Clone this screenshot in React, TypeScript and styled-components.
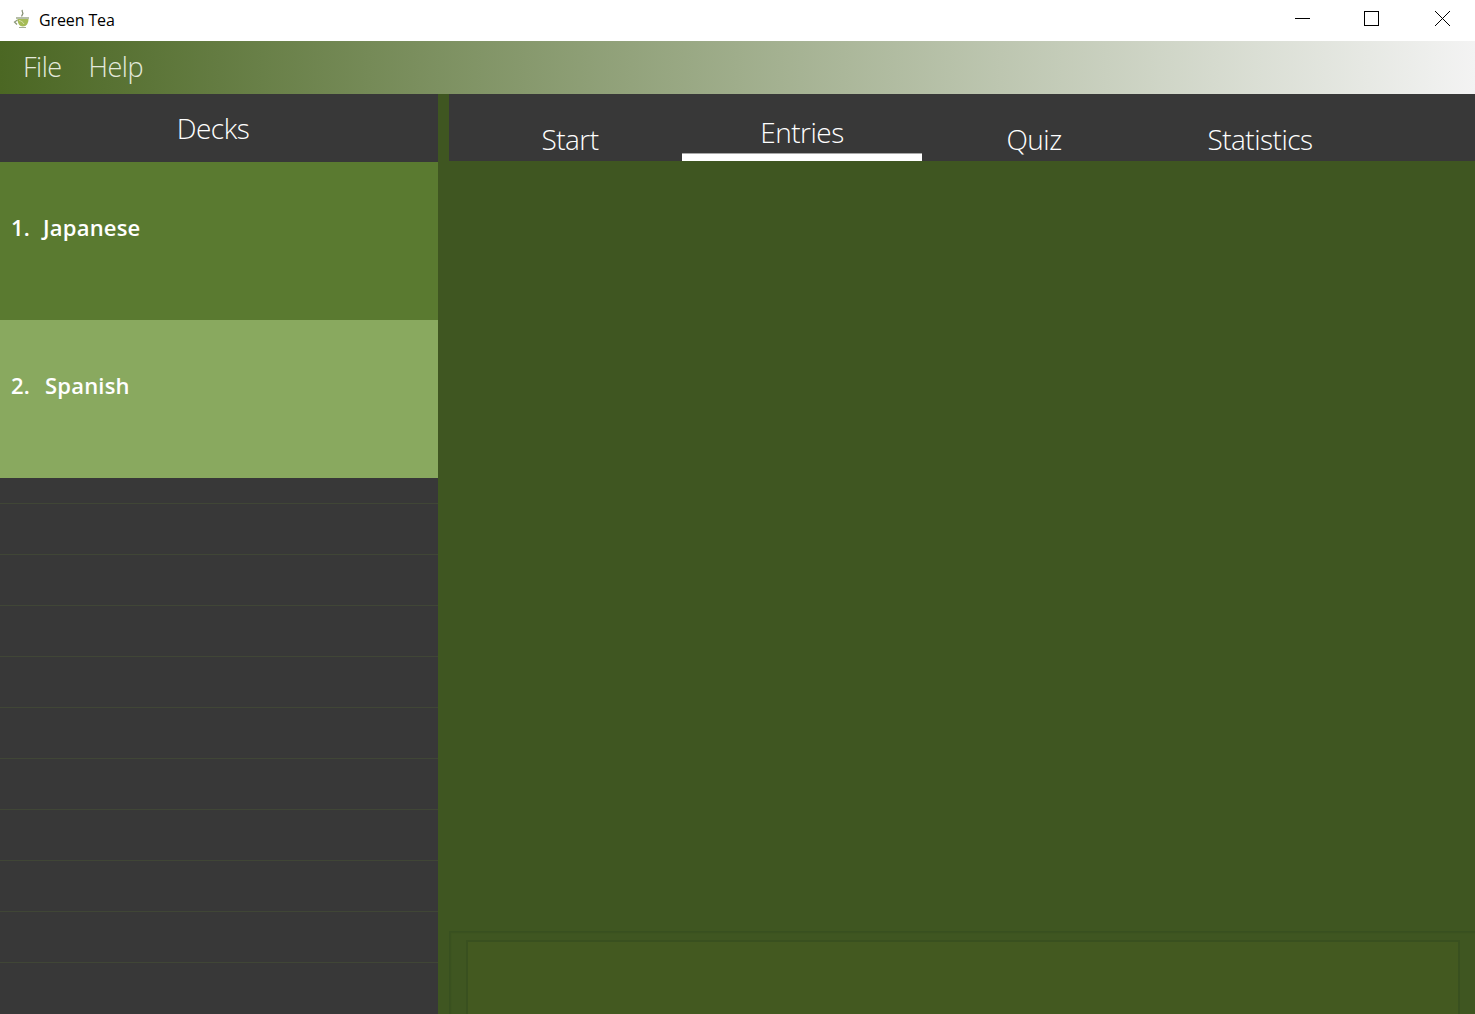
import React from "react";
import styled, { createGlobalStyle } from "styled-components";

const GlobalStyle = createGlobalStyle`
  html, body {
    margin: 0;
    padding: 0;
    height: 100%;
    overflow: hidden;
    background: #3f5621;
  }
  * {
    box-sizing: border-box;
  }
  #root {
    height: 100%;
  }
`;

const Window = styled.div`
  width: 100%;
  height: 1014px;
  display: flex;
  flex-direction: column;
  overflow: hidden;
  font-family: "Open Sans", "Noto Sans", sans-serif;
`;

const TitleBar = styled.div`
  height: 41px;
  flex: none;
  display: flex;
  align-items: center;
  justify-content: space-between;
  background: #ffffff;
`;

const TitleLeft = styled.div`
  display: flex;
  align-items: center;
  padding-left: 13px;
  gap: 8px;
`;

const TitleIcon = styled.svg`
  width: 18px;
  height: 20px;
  margin-top: -3px;
  display: block;
`;

const TitleText = styled.span`
  font-size: 16px;
  color: #000000;
  line-height: 20px;
  margin-top: -2px;
  letter-spacing: -0.12px;
`;

const WindowControls = styled.div`
  display: flex;
  align-items: center;
  margin-top: -6px;
`;

const ControlIcon = styled.svg`
  width: 70px;
  height: 16px;
  display: block;
`;

const MenuBar = styled.div`
  height: 53px;
  flex: none;
  display: flex;
  align-items: center;
  padding: 0 0 2px 23px;
  gap: 27px;
  background: linear-gradient(90deg, #4b6723 0%, #f3f3f3 100%);
`;

const MenuItem = styled.span`
  font-size: 27px;
  font-weight: 300;
  color: #e4e9dc;
  letter-spacing: -0.5px;
  line-height: 34px;
`;

const Body = styled.div`
  flex: 1;
  display: flex;
  min-height: 0;
`;

const Sidebar = styled.aside`
  width: 438px;
  flex: none;
  display: flex;
  flex-direction: column;
  background: #383838;
  overflow: hidden;
`;

const SidebarHeader = styled.div`
  height: 68px;
  flex: none;
  display: flex;
  justify-content: center;
  padding: 15px 12px 0 0;
  font-size: 28px;
  font-weight: 300;
  line-height: 38px;
  letter-spacing: -0.5px;
  color: #ffffff;
`;

const DeckCard = styled.div<{ $bg: string }>`
  height: 158px;
  flex: none;
  padding: 50px 11px 0;
  background: ${(p) => p.$bg};
  color: #ffffff;
  font-size: 22px;
  font-weight: 600;
  line-height: 30px;
  letter-spacing: 0.2px;
`;

const DeckNumber = styled.span<{ $gap: number }>`
  margin-right: ${(p) => p.$gap}px;
`;

const EmptyRow = styled.div<{ $height: number }>`
  height: ${(p) => p.$height}px;
  flex: none;
  border-bottom: 1px solid #404636;
`;

const Main = styled.main`
  flex: 1;
  min-width: 0;
  display: flex;
  flex-direction: column;
  padding-left: 11px;
  background: #3f5621;
`;

const TabBar = styled.nav`
  height: 67px;
  flex: none;
  display: flex;
  padding-left: 9px;
  background: #383838;
`;

const Tab = styled.div<{ $width: number; $selected?: boolean }>`
  width: ${(p) => p.$width}px;
  height: 67px;
  flex: none;
  text-align: center;
  padding-top: ${(p) => (p.$selected ? 18 : 25)}px;
  font-size: 28px;
  font-weight: 300;
  line-height: 40px;
  letter-spacing: -0.5px;
  color: #ffffff;
  border-bottom: ${(p) => (p.$selected ? "7px solid #ffffff" : "none")};
  box-shadow: ${(p) => (p.$selected ? "inset 0 -1px 0 #a8a8a8" : "none")};
`;

const Content = styled.div`
  flex: 1;
  min-height: 0;
`;

const CommandPanel = styled.div`
  height: 83px;
  flex: none;
  padding: 8px 15px 0 16px;
  border-top: 1px solid #385020;
  border-left: 1px solid #385020;
  box-shadow: inset 1px 1px 1px #3a5120;
`;

const CommandBox = styled.div`
  height: 90px;
  background: #435920;
  border: 2px solid #39501f;
`;

const TeaCup = () => (
  <TitleIcon viewBox="0 0 18 20">
    <path d="M9.500 1c-1.800 1.400 1.800 2.600 0 4.500-.6.6-.9 1.200-.6 2" fill="none" stroke="#7f8a6c" strokeWidth="1.2" />
    <path d="M3 9h13" stroke="#8d9a7a" strokeWidth="1.300" />
    <path d="M4.500 10h11c0 4.400-2.200 7.500-5.600 7.500S4.500 14.400 4.500 10z" fill="#a5bb55" />
    <path d="M4.500 11 1.500 13l2.500 2.500" fill="none" stroke="#8a9578" strokeWidth="1.200" />
    <path d="M6 11.500c2 .3 4 1.500 5 3.500" fill="none" stroke="#d8e0b0" strokeWidth="1" />
    <path d="M6 18.500h7" stroke="#a3ae92" strokeWidth="1" />
  </TitleIcon>
);

const rowHeights = [26, 51, 51, 51, 51, 51, 51, 51, 51, 51, 60];

export default function App() {
  return (
    <Window>
      <GlobalStyle />
      <TitleBar>
        <TitleLeft>
          <TeaCup />
          <TitleText>Green Tea</TitleText>
        </TitleLeft>
        <WindowControls>
          <ControlIcon viewBox="0 0 70 16">
            <path d="M30 8.500h15" stroke="#000" strokeWidth="1" />
          </ControlIcon>
          <ControlIcon viewBox="0 0 70 16">
            <rect x="29.500" y="1.500" width="14" height="14" fill="none" stroke="#000" strokeWidth="1" />
          </ControlIcon>
          <ControlIcon viewBox="0 0 70 16">
            <path d="M30 1l15 15M45 1L30 16" stroke="#000" strokeWidth="1" />
          </ControlIcon>
        </WindowControls>
      </TitleBar>
      <MenuBar>
        <MenuItem>File</MenuItem>
        <MenuItem>Help</MenuItem>
      </MenuBar>
      <Body>
        <Sidebar>
          <SidebarHeader>Decks</SidebarHeader>
          <DeckCard $bg="#5a7a30">
            <DeckNumber $gap={13}>1.</DeckNumber>Japanese
          </DeckCard>
          <DeckCard $bg="#89a95f">
            <DeckNumber $gap={15}>2.</DeckNumber>Spanish
          </DeckCard>
          {rowHeights.map((h, i) => (
            <EmptyRow key={i} $height={h} />
          ))}
        </Sidebar>
        <Main>
          <TabBar>
            <Tab $width={224}>Start</Tab>
            <Tab $width={240} $selected>
              Entries
            </Tab>
            <Tab $width={224}>Quiz</Tab>
            <Tab $width={228}>Statistics</Tab>
          </TabBar>
          <Content />
          <CommandPanel>
            <CommandBox />
          </CommandPanel>
        </Main>
      </Body>
    </Window>
  );
}
